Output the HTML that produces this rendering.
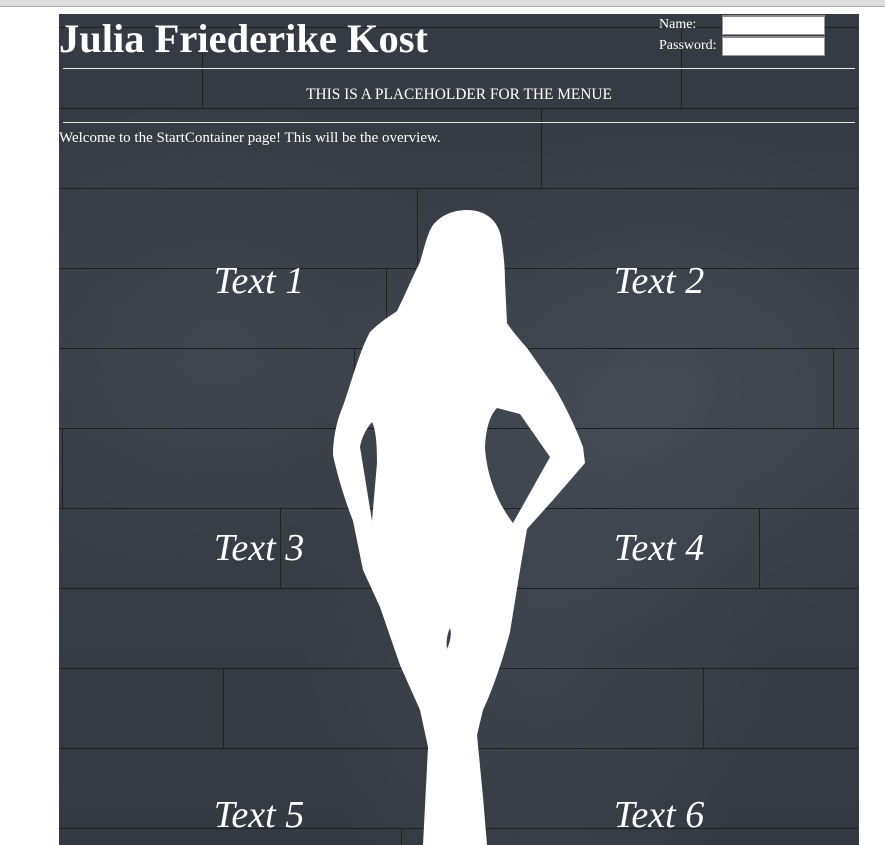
<!DOCTYPE html>
<html style="overflow:hidden"><head><meta charset="utf-8"><style>
html,body{overflow:hidden}
body{margin:0;background:#fff;width:885px;height:845px;position:relative;font-family:"Liberation Serif",serif;color:#fff}
#bar{position:absolute;left:0;top:0;width:885px;height:6px;background:#dedede;border-bottom:1px solid #b0b0b0}
#c{position:absolute;left:59px;top:14px;width:800px;height:831px;overflow:hidden;
background:
radial-gradient(ellipse at 75% 45%,rgba(120,130,145,.2),transparent 40%),
radial-gradient(ellipse at 20% 40%,rgba(110,120,135,.15),transparent 35%),
radial-gradient(ellipse at 60% 75%,rgba(110,120,135,.14),transparent 35%),
linear-gradient(#363a42,#383d45 50%,#353a42);}
.h{position:absolute;left:0;width:800px;height:1px;background:#1d2025}
.v{position:absolute;width:1px;height:80px;background:#1d2025}
h1{position:absolute;left:0;top:2px;margin:0;font-size:40.5px;font-weight:bold;line-height:46px;white-space:nowrap}
.lb{position:absolute;font-size:14px;line-height:16px}
.in{position:absolute;left:663px;width:101px;height:17px;background:#fff;border:1px solid #9a9a9a;border-top:2px solid #8a8a8a}
.hr{position:absolute;left:4px;width:792px;height:1px;background:#e8e8e8}
.t{position:absolute;font-size:38px;font-style:italic;width:400px;text-align:center;line-height:40px}
</style></head><body>
<div id="bar"></div>
<div id="c">
<div class="h" style="top:13px"></div><div class="h" style="top:94px"></div><div class="h" style="top:174px"></div>
<div class="h" style="top:254px"></div><div class="h" style="top:334px"></div><div class="h" style="top:414px"></div>
<div class="h" style="top:494px"></div><div class="h" style="top:574px"></div><div class="h" style="top:654px"></div>
<div class="h" style="top:734px"></div><div class="h" style="top:814px"></div>
<div class="v" style="left:143px;top:14px"></div><div class="v" style="left:622px;top:14px"></div>
<div class="v" style="left:482px;top:94px"></div><div class="v" style="left:358px;top:174px"></div>
<div class="v" style="left:327px;top:254px"></div><div class="v" style="left:295px;top:334px"></div>
<div class="v" style="left:774px;top:334px"></div><div class="v" style="left:3px;top:414px"></div>
<div class="v" style="left:221px;top:494px"></div><div class="v" style="left:700px;top:494px"></div>
<div class="v" style="left:164px;top:654px"></div><div class="v" style="left:644px;top:654px"></div>
<div class="v" style="left:342px;top:814px"></div>
<h1>Julia Friederike Kost</h1>
<div class="lb" style="left:600px;top:3px">Name:</div>
<div class="lb" style="left:600px;top:24px">Password:</div>
<div class="in" style="top:1px"></div><div class="in" style="top:22px"></div>
<div class="hr" style="top:54px"></div>
<div class="lb" style="left:0;width:800px;text-align:center;top:73px;font-size:15.4px">THIS IS A PLACEHOLDER FOR THE MENUE</div>
<div class="hr" style="top:108px"></div>
<div class="lb" style="left:0;top:116px;font-size:15px">Welcome to the StartContainer page! This will be the overview.</div>
<div class="t" style="left:0;top:247px">Text 1</div><div class="t" style="left:400px;top:247px">Text 2</div>
<div class="t" style="left:0;top:514px">Text 3</div><div class="t" style="left:400px;top:514px">Text 4</div>
<div class="t" style="left:0;top:781px">Text 5</div><div class="t" style="left:400px;top:781px">Text 6</div>
<svg width="800" height="831" style="position:absolute;left:0;top:0" viewBox="59 14 800 831">
<path fill="#fff" fill-rule="evenodd" d="M467 210 C485 210 498 220 501 237 C504 255 505 270 505 282 L507 323 C515 335 522 342 527 348 L553 385 C565 405 576 428 583 447 L585 463 L553 500 L527 529 L520 570 L510 632 C500 670 490 695 483 710 L477 735 L483 797 L487 845 L423 845 L428 747 L420 710 L400 665 L380 607 L363 570 L353 521 C345 500 338 478 333 455 C333 440 336 422 343 406 C352 380 360 350 370 332 C380 322 390 316 397 311 C405 295 412 278 420 262 C425 245 428 232 433 225 C442 214 455 210 467 210 Z
M372 422 C365 430 361 440 360 447 L372 521 L377 463 C377 445 376 430 372 422 Z
M497 408 L520 414 L550 457 L513 523 C495 500 486 470 485 447 C486 428 490 415 497 408 Z
M450 628 C447 634 446 642 447 649 C450 642 452 635 450 628 Z"/>
</svg>
</div>
</body></html>
